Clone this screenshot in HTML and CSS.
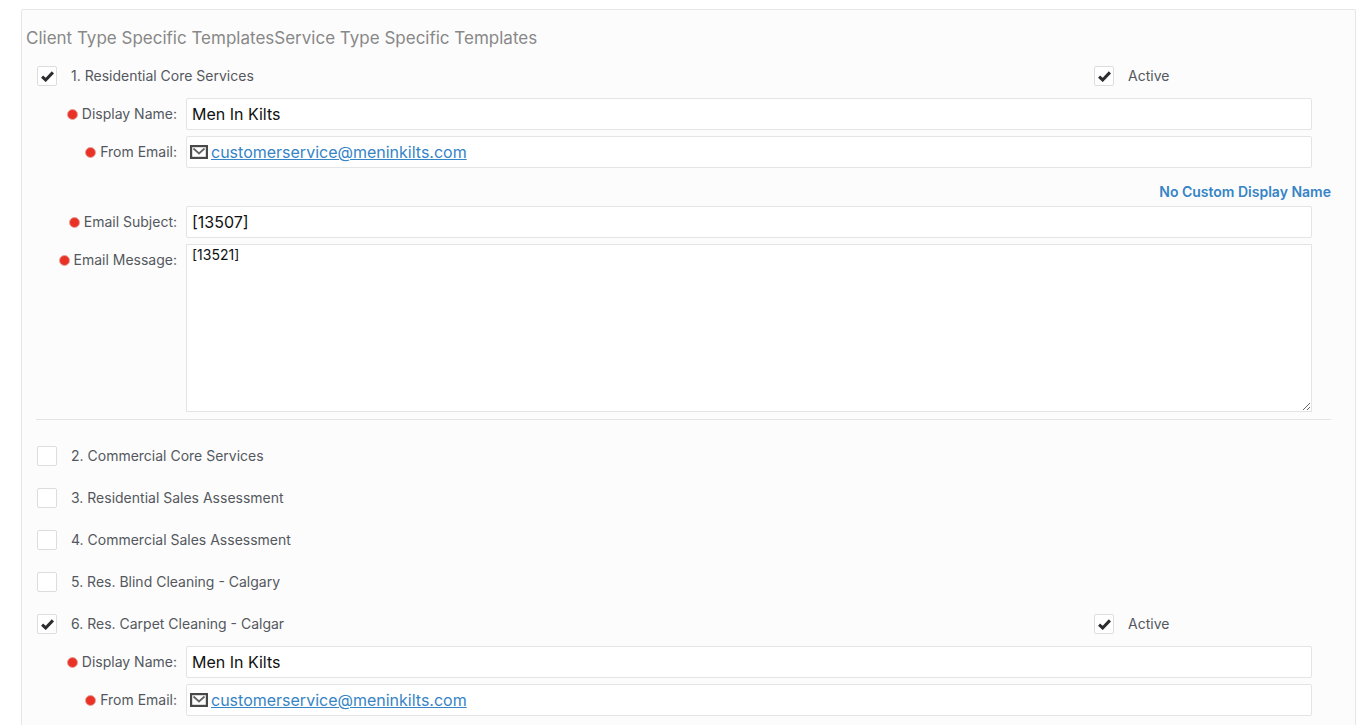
FILE: index.html
```html
<!DOCTYPE html>
<html lang="en">
<head>
  <meta charset="UTF-8" />
  <title>Service Type Specific Templates</title>
  <link rel="stylesheet" href="styles.css">
</head>
<body>
  <form class="panel">
    <h2 class="panel-title">Client Type Specific TemplatesService Type Specific Templates</h2>

    <!-- 1 -->
    <section class="template">
      <div class="template-head">
        <label class="check"><input type="checkbox" checked> 1. Residential Core Services</label>
        <label class="check active"><input type="checkbox" checked> Active</label>
      </div>
      <div class="fields">
        <div class="field">
          <label class="field-label" for="name1">Display Name:</label>
          <input class="box" id="name1" type="text" value="Men In Kilts">
        </div>
        <div class="field">
          <span class="field-label">From Email:</span>
          <div class="box email">
            <svg class="mail" width="18" height="14" viewBox="0 0 18 14">
              <rect x="1" y="1" width="16" height="12" fill="#fff" stroke="#484848" stroke-width="2.4"/>
              <path d="M3.5 3.5 L9 8.5 L14.5 3.5" fill="none" stroke="#666" stroke-width="1.8"/>
            </svg>
            <a href="mailto:customerservice@meninkilts.com">customerservice@meninkilts.com</a>
          </div>
        </div>
        <div class="custom-name"><a href="#">No Custom Display Name</a></div>
        <div class="field">
          <label class="field-label" for="subject1">Email Subject:</label>
          <input class="box" id="subject1" type="text" value="[13507]">
        </div>
        <div class="field">
          <label class="field-label" for="message1">Email Message:</label>
          <textarea class="box message" id="message1">[13521]</textarea>
        </div>
      </div>
      <hr class="divider">
    </section>

    <!-- 2 - 5, not enabled -->
    <section class="template">
      <div class="template-head">
        <label class="check"><input type="checkbox"> 2. Commercial Core Services</label>
      </div>
    </section>
    <section class="template">
      <div class="template-head">
        <label class="check"><input type="checkbox"> 3. Residential Sales Assessment</label>
      </div>
    </section>
    <section class="template">
      <div class="template-head">
        <label class="check"><input type="checkbox"> 4. Commercial Sales Assessment</label>
      </div>
    </section>
    <section class="template">
      <div class="template-head">
        <label class="check"><input type="checkbox"> 5. Res. Blind Cleaning - Calgary</label>
      </div>
    </section>

    <!-- 6 -->
    <section class="template">
      <div class="template-head">
        <label class="check"><input type="checkbox" checked> 6. Res. Carpet Cleaning - Calgar</label>
        <label class="check active"><input type="checkbox" checked> Active</label>
      </div>
      <div class="fields">
        <div class="field">
          <label class="field-label" for="name6">Display Name:</label>
          <input class="box" id="name6" type="text" value="Men In Kilts">
        </div>
        <div class="field">
          <span class="field-label">From Email:</span>
          <div class="box email">
            <svg class="mail" width="18" height="14" viewBox="0 0 18 14">
              <rect x="1" y="1" width="16" height="12" fill="#fff" stroke="#484848" stroke-width="2.4"/>
              <path d="M3.5 3.5 L9 8.5 L14.5 3.5" fill="none" stroke="#666" stroke-width="1.8"/>
            </svg>
            <a href="mailto:customerservice@meninkilts.com">customerservice@meninkilts.com</a>
          </div>
        </div>
      </div>
    </section>
  </form>
</body>
</html>
```
FILE: styles.css
```css
* { box-sizing: border-box; }
body {
  margin: 0;
  background: #fff;
  color: #54585e;
  font: 14px/20px Inter, "Liberation Sans", sans-serif;
}
a { color: #3584c6; }

.panel {
  margin: 9px 10px 0 21px;
  padding: 18px 24px 9px 14px;
  background: #fcfcfc;
  border: 1px solid #e6e6e6;
  border-bottom: 0;
  border-radius: 2px 2px 0 0;
}
.panel-title {
  margin: 0 0 7px -10px;
  color: #888;
  font-size: 17px;
  font-weight: 400;
  line-height: 20px;
}

/* checkbox rows */
.template-head {
  display: flex;
  justify-content: space-between;
  align-items: center;
  height: 42px;
}
.check { display: flex; align-items: center; gap: 14px; }
.check.active { width: 238px; }
.check input {
  appearance: none;
  width: 20px;
  height: 20px;
  margin: 0 0 0 1px;
  background: #fff;
  border: 1px solid #ddd;
  border-radius: 2px;
}
.check input:checked {
  background: #fff url("data:image/svg+xml,%3Csvg xmlns='http://www.w3.org/2000/svg' viewBox='0 0 12 10'%3E%3Cpath d='M1 5.2 L4.3 8.2 L11 1.2' fill='none' stroke='%232b2d30' stroke-width='2.8'/%3E%3C/svg%3E") center / 13px 11px no-repeat;
}

/* fields */
.fields { display: flex; flex-direction: column; gap: 6px; padding-top: 1px; }
.field { display: flex; gap: 9px; margin-right: 19px; }
.field-label {
  display: flex;
  justify-content: flex-end;
  align-items: center;
  gap: 4px;
  flex: 0 0 141px;
  height: 32px;
}
.field-label::before {
  content: "";
  width: 9px;
  height: 9px;
  background: #e93225;
  border: 1px solid #e8a39d;
  border-radius: 50%;
}
.box {
  flex: 1;
  min-width: 0;
  height: 32px;
  margin: 0;
  padding: 0 5px;
  background: #fff;
  border: 1px solid #e4e4e4;
  border-radius: 2px;
  color: #111;
  font: 16px/20px Inter, "Liberation Sans", sans-serif;
}
.email { display: flex; align-items: center; gap: 3px; padding: 0 3px; }
.message {
  height: 168px;
  border-radius: 0;
  font-size: 14px;
  resize: vertical;
}
.custom-name { margin: 8px 0 -2px; text-align: right; }
.custom-name a { font-weight: 600; text-decoration: none; }
.divider { margin: 7px 0 15px; border: 0; border-top: 1px solid #e4e4e4; }
```
